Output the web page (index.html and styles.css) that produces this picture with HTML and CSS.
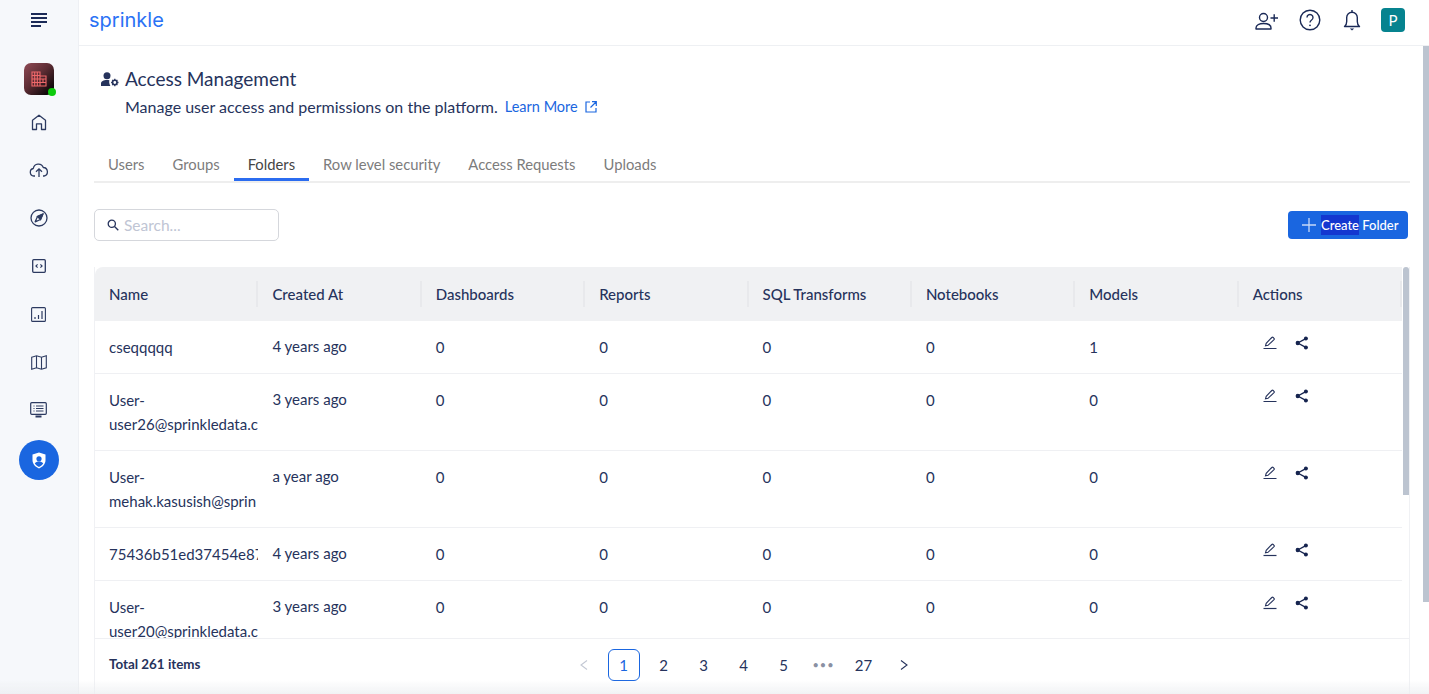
FILE: index.html
```html
<!DOCTYPE html>
<html lang="en">

<head>
  <meta charset="utf-8">
  <title>Access Management</title>
  <link rel="stylesheet" href="styles.css">
</head>

<body>
  <svg class="defs" width="0" height="0">
    <symbol id="edit" viewBox="0 0 14 14">
      <path d="M2.500 9.800 3.200 7.400 8.800 1.500a1 1 0 0 1 1.400 0l.8.8a1 1 0 0 1 0 1.400L5 9.300z" fill="none" stroke="currentColor" stroke-width="1.100"/>
      <path d="M0.500 12.500h13" stroke="currentColor" stroke-width="1.200"/>
    </symbol>
    <symbol id="share" viewBox="0 0 14 14">
      <path d="M10.800 2.600 2.800 7l8 4.400" fill="none" stroke="currentColor" stroke-width="1.300"/>
      <circle cx="10.900" cy="2.600" r="2"/>
      <circle cx="2.800" cy="7" r="2.200"/>
      <circle cx="10.900" cy="11.400" r="2"/>
    </symbol>
  </svg>

  <div class="app">
    <aside class="sidebar">
      <div class="burger">
        <svg width="18" height="16" viewBox="0 0 18 16"><path d="M1 2h16M1 6h16M1 10h16M1 14h10" stroke="#1b2a57" stroke-width="2"/></svg>
      </div>
      <div class="org">
        <svg width="16" height="16" viewBox="0 0 16 16" fill="none" stroke="#f0686a" stroke-width="1.100">
          <path d="M1 1h8v14H1zM9 5h6v10H9z"/>
          <path d="M1 4.500h8M1 8h8M1 11.500h8M3.700 1v14M6.300 1v14M9 8h6M9 11.500h6M12 8v3.500"/>
        </svg>
        <span class="org-dot"></span>
      </div>
      <nav class="nav">
        <a class="nav-item">
          <svg width="16" height="17" viewBox="0 0 16 17" fill="none" stroke="#2c3a60" stroke-width="1.300"><path d="M1.500 15.500V6.300L8 1.200l6.500 5.100v9.200h-4V9.800h-5v5.700z" stroke-linejoin="round"/></svg>
        </a>
        <a class="nav-item">
          <svg width="20" height="16" viewBox="0 0 20 16" fill="none" stroke="#2c3a60" stroke-width="1.300"><path d="M6 14H4.800a3.800 3.800 0 0 1-.5-7.500A5.200 5.200 0 0 1 14.300 5.500a4.300 4.300 0 0 1 .7 8.500h-1" stroke-linejoin="round"/><path d="M10 15V7M7 9.800l3-3 3 3"/></svg>
        </a>
        <a class="nav-item">
          <svg width="18" height="18" viewBox="0 0 18 18" fill="none" stroke="#2c3a60" stroke-width="1.300"><circle cx="9" cy="9" r="8"/><path d="m12.800 5.200-2.300 5.300-5.300 2.300 2.300-5.300z" stroke-linejoin="round"/><path d="m12.800 5.200-5.300 2.300 3 3z" fill="#2c3a60"/></svg>
        </a>
        <a class="nav-item">
          <svg width="14" height="14" viewBox="0 0 14 14" fill="none" stroke="#2c3a60"><rect x=".7" y=".7" width="12.600" height="12.600" rx="1" stroke-width="1.300"/><path d="M5.600 5.300 3.900 7l1.700 1.700M8.400 5.300 10.100 7 8.400 8.700" stroke-width="1.100"/></svg>
        </a>
        <a class="nav-item">
          <svg width="15" height="15" viewBox="0 0 15 15" fill="none" stroke="#2c3a60"><rect x=".6" y=".6" width="13.800" height="13.800" rx="1" stroke-width="1.100"/><path d="M4 12v-2M7.500 12V8M11 12V4" stroke-width="1.200"/></svg>
        </a>
        <a class="nav-item">
          <svg width="16" height="15" viewBox="0 0 16 15" fill="none" stroke="#2c3a60" stroke-width="1.100"><path d="M.7 2.200 5.500.8l5 1.400 4.800-1.400v12l-4.800 1.400-5-1.400-4.800 1.400zM5.500.8v12M10.500 2.200v12.400"/></svg>
        </a>
        <a class="nav-item">
          <svg width="17" height="16" viewBox="0 0 17 16" fill="none" stroke="#2c3a60"><rect x=".7" y=".7" width="15.600" height="11.600" rx="1" stroke-width="1.200"/><path d="M3.500 4h1M6 4h7.500M3.500 6.500h1M6 6.500h7.500M3.500 9h1M6 9h7.500" stroke-width="1.100"/><path d="M5.500 14.500h6" stroke-width="2"/></svg>
        </a>
        <a class="nav-item is-active">
          <svg width="14" height="17" viewBox="0 0 14 17"><path d="M7 .5 13.500 2.500V8c0 4-2.800 7-6.500 8.500C3.300 15 .5 12 .5 8V2.500z" fill="#fff"/><circle cx="7" cy="6.800" r="2.600" fill="#1a66e0"/><path d="M2.800 11.500c1-1.500 2.500-2 4.200-2s3.200.5 4.200 2C10.200 13 8.800 14.200 7 15c-1.800-.8-3.200-2-4.200-3.500z" fill="#1a66e0"/></svg>
        </a>
      </nav>
    </aside>

    <div class="page">
      <header class="topbar">
        <span class="logo">sprinkle</span>
        <div class="top-actions">
          <svg width="24" height="20" viewBox="0 0 24 20" fill="none" stroke="#1b2a57" stroke-width="1.400"><circle cx="9.500" cy="7.500" r="4"/><path d="M2 19v-1c0-3 3.500-4.500 7.500-4.500s7.500 1.500 7.500 4.500v1z" stroke-linejoin="round"/><path d="M16.500 8h7.500M20.200 4.200v7.500"/></svg>
          <svg class="help" width="22" height="22" viewBox="0 0 22 22" fill="none" stroke="#1b2a57" stroke-width="1.400"><circle cx="11" cy="11" r="9.800"/><path d="M8 8.500a3 3 0 1 1 4.600 2.500c-1 .7-1.600 1.300-1.600 2.500"/><circle cx="11" cy="16.300" r=".9" fill="#1b2a57" stroke="none"/></svg>
          <svg width="18" height="22" viewBox="0 0 18 22" fill="none" stroke="#1b2a57" stroke-width="1.400"><path d="M1.500 17.500c1.500-1 2.200-2.500 2.200-5V8.500a5.300 5.300 0 0 1 10.600 0v4c0 2.500.7 4 2.200 5z" stroke-linejoin="round"/><path d="M9 1v2"/><path d="M6.800 19.500h4.400l-2.200 2z" fill="#1b2a57" stroke="none"/></svg>
          <span class="user">P</span>
        </div>
      </header>

      <main class="content">
        <div class="heading">
          <svg class="heading-icon" width="18" height="15" viewBox="0 0 18 15" fill="#26335c"><circle cx="6" cy="3.700" r="3.500"/><path d="M0 14v-2.500C0 9.500 2.500 8 6 8c1 0 1.700.1 2.400.3-.5 1.800-.1 3.900 1 5.700z"/><circle cx="13.800" cy="10.500" r="2.200" fill="none" stroke="#26335c" stroke-width="1.600"/><path d="M13.800 6.800v1.500M13.800 12.700v1.500M10.100 10.500h1.500M16 10.500h1.500M11.200 7.900l1 1M15.400 12.100l1 1M16.400 7.900l-1 1M12.200 12.100l-1 1" stroke="#26335c" stroke-width="1.300"/></svg>
          <h1>Access Management</h1>
        </div>
        <p class="subtitle">
          Manage user access and permissions on the platform.
          <a class="learn">Learn More
            <svg width="12" height="12" viewBox="0 0 12 12" fill="none" stroke="#1a66e0" stroke-width="1.200"><path d="M5 1H1v10h10V7M7 .7h4.300V5M11 1 5.500 6.500"/></svg>
          </a>
        </p>

        <div class="tabs">
          <a class="tab">Users</a>
          <a class="tab">Groups</a>
          <a class="tab is-active">Folders</a>
          <a class="tab">Row level security</a>
          <a class="tab">Access Requests</a>
          <a class="tab">Uploads</a>
        </div>

        <div class="toolbar">
          <div class="search">
            <svg width="12" height="12" viewBox="0 0 12 12" fill="none" stroke="#26335c" stroke-width="1.300"><circle cx="4.800" cy="4.800" r="3.600"/><path d="m7.500 7.500 3.800 3.800"/></svg>
            <span>Search...</span>
          </div>
          <button class="create">
            <svg width="14" height="14" viewBox="0 0 14 14" stroke="#c5d8f8" stroke-width="1.300"><path d="M7 0v14M0 7h14"/></svg>
            <span class="label"><span class="selected">Create</span> Folder</span>
          </button>
        </div>

        <section class="grid">
          <div class="grid-scroll">
            <table>
              <thead>
                <tr>
                  <th>Name</th>
                  <th>Created At</th>
                  <th>Dashboards</th>
                  <th>Reports</th>
                  <th>SQL Transforms</th>
                  <th>Notebooks</th>
                  <th>Models</th>
                  <th>Actions</th>
                </tr>
              </thead>
              <tbody>
                <tr>
                  <td>cseqqqqq</td>
                  <td class="age">4 years ago</td>
                  <td>0</td><td>0</td><td>0</td><td>0</td><td>1</td>
                  <td class="actions"><svg class="edit"><use href="#edit"/></svg><svg class="share"><use href="#share"/></svg></td>
                </tr>
                <tr>
                  <td>User-user26@sprinkledata.c</td>
                  <td class="age">3 years ago</td>
                  <td>0</td><td>0</td><td>0</td><td>0</td><td>0</td>
                  <td class="actions"><svg class="edit"><use href="#edit"/></svg><svg class="share"><use href="#share"/></svg></td>
                </tr>
                <tr>
                  <td>User-mehak.kasusish@sprin</td>
                  <td class="age">a year ago</td>
                  <td>0</td><td>0</td><td>0</td><td>0</td><td>0</td>
                  <td class="actions"><svg class="edit"><use href="#edit"/></svg><svg class="share"><use href="#share"/></svg></td>
                </tr>
                <tr>
                  <td>75436b51ed37454e87</td>
                  <td class="age">4 years ago</td>
                  <td>0</td><td>0</td><td>0</td><td>0</td><td>0</td>
                  <td class="actions"><svg class="edit"><use href="#edit"/></svg><svg class="share"><use href="#share"/></svg></td>
                </tr>
                <tr>
                  <td>User-user20@sprinkledata.c</td>
                  <td class="age">3 years ago</td>
                  <td>0</td><td>0</td><td>0</td><td>0</td><td>0</td>
                  <td class="actions"><svg class="edit"><use href="#edit"/></svg><svg class="share"><use href="#share"/></svg></td>
                </tr>
              </tbody>
            </table>
            <div class="grid-thumb"></div>
          </div>
          <footer class="pager">
            <span class="total">Total 261 items</span>
            <div class="pages">
              <a class="page-link is-off">
                <svg width="8" height="10" viewBox="0 0 8 10" fill="none" stroke="currentColor" stroke-width="1.100"><path d="M7 .5 1 5l6 4.500"/></svg>
              </a>
              <a class="page-link is-current">1</a>
              <a class="page-link">2</a>
              <a class="page-link">3</a>
              <a class="page-link">4</a>
              <a class="page-link">5</a>
              <a class="page-link dots">•••</a>
              <a class="page-link">27</a>
              <a class="page-link">
                <svg width="8" height="10" viewBox="0 0 8 10" fill="none" stroke="currentColor" stroke-width="1.100"><path d="m1 .5 6 4.500-6 4.500"/></svg>
              </a>
            </div>
          </footer>
        </section>
      </main>
      <div class="page-thumb"></div>
    </div>
  </div>
  <div class="fade"></div>
</body>

</html>
```

FILE: styles.css
```css
* {
  box-sizing: border-box;
}

html,
body {
  height: 100%;
}

body {
  margin: 0;
  overflow: hidden;
  background-color: #fff;
  font-family: "Lato", "Open Sans", sans-serif;
  font-size: 15px;
  color: #26335c;
}

.defs {
  position: absolute;
}

.app {
  display: flex;
  height: 100%;
}

.sidebar {
  flex: 0 0 79px;
  display: flex;
  flex-direction: column;
  align-items: center;
  padding-right: 1px;
  background-color: #f6f8fb;
  border-right: 1px solid #eef0f4;
}

.burger {
  display: flex;
  justify-content: center;
  width: 100%;
  height: 63px;
  padding-top: 12px;
}

.org {
  position: relative;
  display: flex;
  align-items: center;
  justify-content: center;
  width: 30px;
  height: 32px;
  border-radius: 7px;
  background: linear-gradient(135deg, #8f4a55 0%, #5c2c33 45%, #120a0c 85%);
}

.org-dot {
  position: absolute;
  right: -2px;
  bottom: -1px;
  width: 8px;
  height: 8px;
  border-radius: 50%;
  background-color: #0dcb0d;
}

.nav {
  display: flex;
  flex-direction: column;
  align-items: center;
  width: 100%;
  padding-top: 3px;
}

.nav-item {
  display: flex;
  align-items: center;
  justify-content: center;
  width: 40px;
  height: 48px;
}

.nav-item.is-active {
  height: 40px;
  margin-top: 6px;
  border-radius: 50%;
  background-color: #1a66e0;
}

.page {
  position: relative;
  flex: 1;
  min-width: 0;
  display: flex;
  flex-direction: column;
}

.topbar {
  flex: 0 0 46px;
  display: flex;
  align-items: center;
  justify-content: space-between;
  padding: 0 24px 6px 10px;
  border-bottom: 1px solid #eef0f3;
}

.logo {
  font-family: "Inter", sans-serif;
  font-size: 20px;
  font-weight: 400;
  line-height: 1;
  color: #2a72f5;
}

.top-actions {
  display: flex;
  align-items: center;
  gap: 20px;
}

.help {
  margin: 0 2px 0 1px;
}

.user {
  display: flex;
  align-items: center;
  justify-content: center;
  width: 24px;
  height: 24px;
  border-radius: 4px;
  background-color: #06838f;
  font-size: 15px;
  color: #fff;
}

.content {
  flex: 1;
  min-height: 0;
  padding: 20px 19px 0 15px;
  display: flex;
  flex-direction: column;
}

.heading {
  display: flex;
  align-items: center;
  gap: 6px;
  padding-left: 7px;
  height: 26px;
}

h1 {
  margin: 0;
  font-size: 19px;
  font-weight: 400;
  line-height: 26px;
}

.subtitle {
  display: flex;
  align-items: center;
  gap: 7px;
  margin: 4px 0 0 31px;
  font-size: 16px;
  line-height: 22px;
}

.learn {
  display: inline-flex;
  align-items: center;
  gap: 7px;
  font-size: 14.500px;
  color: #1a66e0;
}

.tabs {
  display: flex;
  height: 36px;
  margin-top: 29px;
  border-bottom: 2px solid #eeeeee;
}

.tab {
  height: 34px;
  padding: 6px 14px 0;
  font-size: 14.800px;
  line-height: 22px;
  color: #7c7c7c;
}

.tab.is-active {
  color: #454545;
  border-bottom: 3px solid #2b6cf0;
}

.toolbar {
  display: flex;
  align-items: center;
  justify-content: space-between;
  height: 32px;
  margin-top: 26px;
  padding-right: 2px;
}

.search {
  display: flex;
  align-items: center;
  gap: 5px;
  width: 185px;
  height: 32px;
  padding-left: 12px;
  border: 1px solid #d5d7dc;
  border-radius: 5px;
  font-size: 15.500px;
  color: #c0c5d4;
}

.create {
  display: flex;
  align-items: center;
  gap: 5px;
  width: 120px;
  height: 28px;
  padding: 0 0 0 14px;
  border: 0;
  border-radius: 4px;
  background-color: #1a66e0;
  font-family: inherit;
  font-size: 13px;
  font-weight: 500;
  color: #fff;
}

.selected {
  background-color: #1437d0;
  padding: 2px 0;
}

.grid {
  margin-top: 26px;
  flex: 1;
  min-height: 0;
  display: flex;
  flex-direction: column;
  border-left: 1px solid #f0f1f4;
  border-right: 1px solid #f0f1f4;
}

.grid-scroll {
  position: relative;
  height: 371px;
  overflow: hidden;
  border-top-left-radius: 8px;
  background-color: #fff;
}

table {
  width: calc(100% - 7px);
  table-layout: fixed;
  border-collapse: separate;
  border-spacing: 0;
}

th {
  position: relative;
  height: 54px;
  padding: 0 14px 1px;
  background-color: #f0f1f3;
  text-align: left;
  font-weight: 500;
  font-size: 15px;
}

th::after {
  content: "";
  position: absolute;
  top: 14px;
  right: 0;
  width: 2px;
  height: 26px;
  background-color: #e8e9ec;
}

td {
  padding: 14px 0 14px 14px;
  border-bottom: 1px solid #eff0f3;
  vertical-align: top;
  line-height: 24px;
  overflow: hidden;
}

td.age {
  padding-top: 13px;
  padding-bottom: 15px;
}

td.actions {
  padding-top: 15px;
  padding-bottom: 13px;
  padding-left: 24px;
}

.edit,
.share {
  width: 14px;
  height: 14px;
  vertical-align: top;
}

.edit {
  color: #26335c;
}

.share {
  margin-left: 18px;
  color: #16244f;
  fill: currentColor;
}

.grid-thumb {
  position: absolute;
  top: 0;
  right: 0;
  width: 6px;
  height: 228px;
  border-radius: 4px 4px 0 0;
  background-color: #bcc4d0;
}

.pager {
  position: relative;
  display: flex;
  align-items: center;
  justify-content: center;
  height: 52px;
  border-top: 1px solid #eff0f3;
}

.total {
  position: absolute;
  top: 17px;
  left: 14px;
  font-size: 13.400px;
  font-weight: 700;
}

.pages {
  display: flex;
  align-items: center;
  gap: 8px;
  margin-left: -17px;
}

.page-link {
  display: flex;
  align-items: center;
  justify-content: center;
  width: 32px;
  height: 32px;
  font-size: 15px;
  border-radius: 6px;
}

.page-link.is-off {
  color: #c3c8d4;
}

.page-link.is-current {
  border: 1px solid #1a66e0;
  color: #1a66e0;
}

.page-link.dots {
  font-size: 11px;
  letter-spacing: 1px;
  color: #8a90a3;
}

.page-thumb {
  position: absolute;
  top: 46px;
  right: 0;
  width: 6px;
  height: 556px;
  background-color: #bcc4d0;
}

.fade {
  position: fixed;
  left: 0;
  right: 0;
  bottom: 0;
  height: 14px;
  background: linear-gradient(rgba(235, 237, 240, 0), rgba(235, 237, 240, .7));
  pointer-events: none;
}
```
